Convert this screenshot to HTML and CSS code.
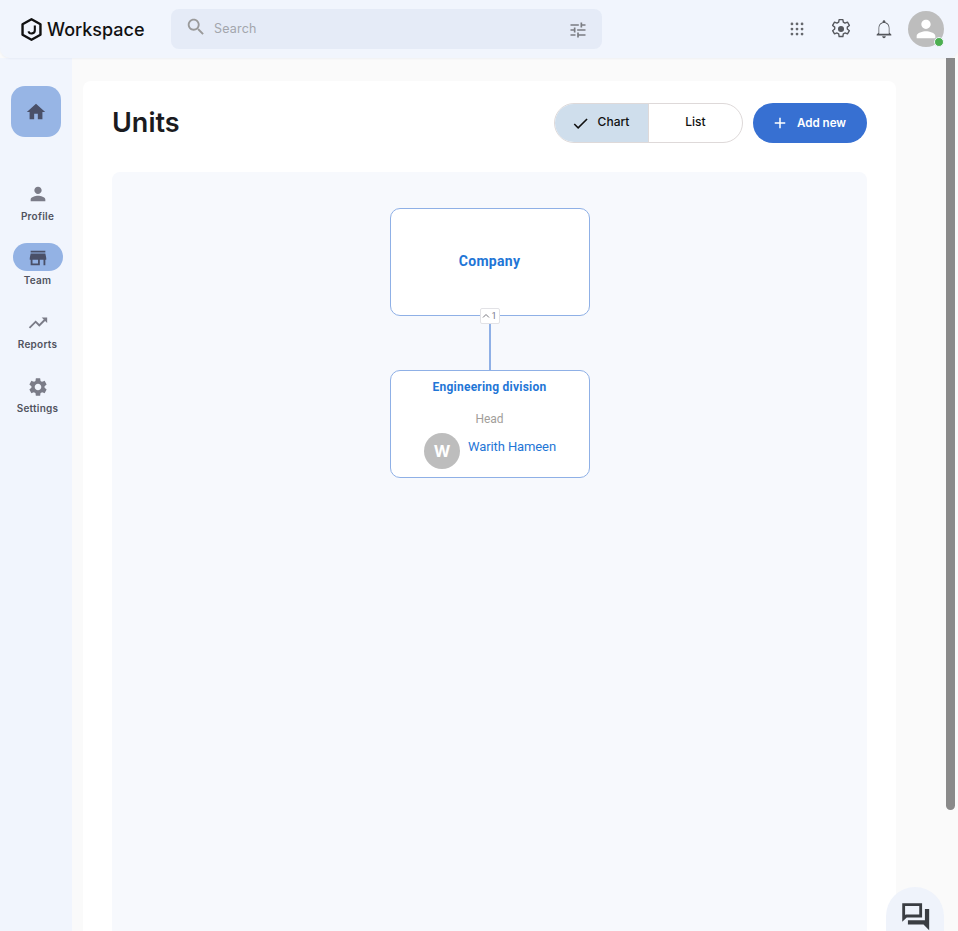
FILE: index.html
```html
<!DOCTYPE html>
<html lang="en">
<head>
<meta charset="utf-8">
<title>Workspace</title>
<link rel="stylesheet" href="styles.css">
</head>
<body>
<header class="topbar">
  <div class="brand">
    <svg class="brand-logo" viewBox="0 0 24 24"><path d="M12 2.2 20.6 7v10L12 21.8 3.4 17V7z" fill="none" stroke="#111" stroke-width="2.3" stroke-linejoin="round"/><path d="M15.2 8.2v4.4a3.2 3.2 0 0 1-6.2 1.1" fill="none" stroke="#111" stroke-width="2"/></svg>
    <span class="brand-name">Workspace</span>
  </div>
  <div class="search">
    <svg class="search-icon" viewBox="0 0 24 24"><path d="M15.5 14h-.79l-.28-.27C15.41 12.59 16 11.11 16 9.5 16 5.91 13.09 3 9.5 3S3 5.91 3 9.5 5.91 16 9.5 16c1.61 0 3.09-.59 4.23-1.57l.27.28v.79l5 4.99L20.49 19l-4.99-5zm-6 0C7.01 14 5 11.99 5 9.5S7.01 5 9.5 5 14 7.01 14 9.5 11.99 14 9.5 14z"/></svg>
    <span class="search-text">Search</span>
    <svg class="tune-icon" viewBox="0 0 24 24"><path d="M3 17v2h6v-2H3zM3 5v2h10V5H3zm10 16v-2h8v-2h-8v-2h-2v6h2zM7 9v2H3v2h4v2h2V9H7zm14 4v-2H11v2h10zm-6-4h2V7h4V5h-4V3h-2v6z"/></svg>
  </div>
  <div class="top-actions">
    <svg class="top-icon" viewBox="0 0 24 24"><g fill="#66686d"><circle cx="6.5" cy="6.5" r="1.5"/><circle cx="12" cy="6.5" r="1.5"/><circle cx="17.5" cy="6.5" r="1.5"/><circle cx="6.5" cy="12" r="1.5"/><circle cx="12" cy="12" r="1.5"/><circle cx="17.5" cy="12" r="1.5"/><circle cx="6.5" cy="17.5" r="1.5"/><circle cx="12" cy="17.5" r="1.5"/><circle cx="17.5" cy="17.5" r="1.5"/></g></svg>
    <svg class="top-icon" viewBox="1.5 1.5 21 21"><circle cx="12" cy="12" r="2.9" fill="#55575c"/><path fill="none" stroke="#55575c" stroke-width="1.3" stroke-linejoin="round" d="M10.2 3h3.6l.4 2.5 1.6.9 2.4-.9 1.8 3.1-2 1.6v1.8l2 1.6-1.8 3.1-2.4-.9-1.6.9-.4 2.5h-3.6l-.4-2.5-1.6-.9-2.4.9-1.8-3.1 2-1.6v-1.8l-2-1.6 1.8-3.1 2.4.9 1.6-.9z"/></svg>
    <svg class="top-icon" viewBox="0 0 24 24"><path fill="#55575c" d="M12 22c1.1 0 2-.9 2-2h-4c0 1.1.9 2 2 2zm6-6v-5c0-3.07-1.63-5.64-4.5-6.32V4c0-.83-.67-1.5-1.5-1.5s-1.5.67-1.5 1.5v.68C7.64 5.36 6 7.92 6 11v5l-2 2v1h16v-1l-2-2zm-.8 1.2H6.8V11c0-2.9 2-5.6 5.2-5.6s5.2 2.7 5.2 5.6v6.2z"/></svg>
    <div class="avatar">
      <svg viewBox="0 0 24 24"><path fill="#fff" d="M12 12c2.21 0 4-1.79 4-4s-1.79-4-4-4-4 1.79-4 4 1.79 4 4 4zm0 2c-2.67 0-8 1.34-8 4v2h16v-2c0-2.66-5.33-4-8-4z"/></svg>
      <span class="status-dot"></span>
    </div>
  </div>
</header>

<div class="shell">
  <nav class="sidebar">
    <div class="home-tile">
      <svg viewBox="0 0 24 24"><path fill="#4a5068" d="M10 20v-6h4v6h5v-8h3L12 3 2 12h3v8z"/></svg>
    </div>
    <ul class="nav-list">
      <li class="nav-item">
        <span class="nav-pill"><svg viewBox="0 0 24 24"><path d="M12 12c2.21 0 4-1.79 4-4s-1.79-4-4-4-4 1.79-4 4 1.79 4 4 4zm0 2c-2.67 0-8 1.34-8 4v2h16v-2c0-2.66-5.33-4-8-4z"/></svg></span>
        <span class="nav-label">Profile</span>
      </li>
      <li class="nav-item nav-item-active">
        <span class="nav-pill"><svg viewBox="0 0 24 24"><path d="M20 4H4v2h16V4zm1 10v-2l-1-5H4l-1 5v2h1v6h10v-6h4v6h2v-6h1zm-9 4H6v-4h6v4z"/></svg></span>
        <span class="nav-label">Team</span>
      </li>
      <li class="nav-item">
        <span class="nav-pill"><svg viewBox="0 0 24 24"><path d="M16 6l2.29 2.29-4.88 4.88-4-4L2 16.59 3.41 18l6-6 4 4 6.3-6.29L22 12V6z"/></svg></span>
        <span class="nav-label">Reports</span>
      </li>
      <li class="nav-item">
        <span class="nav-pill"><svg viewBox="0 0 24 24"><path d="M19.14 12.94c.04-.3.06-.61.06-.94 0-.32-.02-.64-.07-.94l2.03-1.58c.18-.14.23-.41.12-.61l-1.92-3.32c-.12-.22-.37-.29-.59-.22l-2.39.96c-.5-.38-1.03-.7-1.62-.94l-.36-2.54c-.04-.24-.24-.41-.48-.41h-3.84c-.24 0-.43.17-.47.41l-.36 2.54c-.59.24-1.13.57-1.62.94l-2.39-.96c-.22-.08-.47 0-.59.22L2.74 8.87c-.12.21-.08.47.12.61l2.03 1.58c-.05.3-.09.63-.09.94s.02.64.07.94l-2.03 1.58c-.18.14-.23.41-.12.61l1.92 3.32c.12.22.37.29.59.22l2.39-.96c.5.38 1.03.7 1.62.94l.36 2.54c.05.24.24.41.48.41h3.84c.24 0 .44-.17.47-.41l.36-2.54c.59-.24 1.13-.56 1.62-.94l2.39.96c.22.08.47 0 .59-.22l1.92-3.32c.12-.22.07-.47-.12-.61l-2.01-1.58zM12 15.6c-1.98 0-3.6-1.62-3.6-3.6s1.62-3.6 3.6-3.6 3.6 1.62 3.6 3.6-1.62 3.6-3.6 3.6z"/></svg></span>
        <span class="nav-label">Settings</span>
      </li>
    </ul>
  </nav>

  <main class="main">
    <section class="card">
      <div class="card-head">
        <h1 class="title">Units</h1>
        <div class="head-actions">
          <div class="toggle">
            <div class="toggle-opt toggle-on">
              <svg viewBox="0 0 24 24"><path fill="#111" d="M9 16.17L4.83 12l-1.42 1.41L9 19 21 7l-1.41-1.41z"/></svg>
              <span>Chart</span>
            </div>
            <div class="toggle-opt toggle-off"><span>List</span></div>
          </div>
          <button class="add-btn" type="button">
            <svg viewBox="0 0 24 24"><path fill="#fff" d="M19 13h-6v6h-2v-6H5v-2h6V5h2v6h6v2z"/></svg>
            <span>Add new</span>
          </button>
        </div>
      </div>
      <div class="chart">
        <div class="org-node org-root">
          <span class="org-name-lg">Company</span>
          <span class="collapse-badge"><svg class="caret" viewBox="0 0 8 6"><path d="M1 4.5 4 1.5l3 3" fill="none" stroke="#77777f" stroke-width="1"/></svg>1</span>
        </div>
        <div class="connector"></div>
        <div class="org-node org-child">
          <div class="org-name">Engineering division</div>
          <div class="org-role">Head</div>
          <div class="org-person">
            <span class="person-avatar">W</span>
            <span class="person-name">Warith Hameen</span>
          </div>
        </div>
      </div>
    </section>
  </main>
  <div class="gutter"></div>
</div>

<div class="scroll-thumb"></div>
<div class="chat-fab">
  <svg viewBox="0 0 24 24"><path fill="#3a3d42" d="M3 3h14v10H6.2L3 16zm2 2v6.4L5.4 11H15V5zM19 7h3v15l-4-4H7v-3h12z"/></svg>
</div>
</body>
</html>
```
FILE: styles.css
```css
* { box-sizing: border-box; }
html, body { margin: 0; padding: 0; height: 100%; overflow: hidden; }
body { font-family: Inter, "Liberation Sans", sans-serif; background: #fafafa; color: #1b1b1f; }

.topbar {
  height: 58px;
  background: #f1f5fd;
  border-radius: 0 0 10px 10px;
  display: flex;
  align-items: center;
  padding-left: 19px;
  position: relative;
  z-index: 2;
  box-shadow: 0 1px 2px rgba(40, 60, 110, 0.05);
}
.brand { display: flex; align-items: center; width: 152px; }
.brand-logo { width: 25px; height: 25px; margin-right: 3px; flex: none; }
.brand-name { font-size: 18px; font-weight: 500; color: #111; }
.search {
  width: 431px;
  height: 40px;
  background: #e5ebf7;
  border-radius: 8px;
  display: flex;
  align-items: center;
  padding: 0 14px 0 14px;
}
.search-icon { width: 22px; height: 22px; fill: #9a9a9a; margin-top: -4px; }
.search-text { font-size: 12.5px; color: #a3a6ad; margin-left: 7px; flex: 1; margin-top: -2px; letter-spacing: 0.2px; }
.tune-icon { width: 20px; height: 20px; fill: #7a7c82; margin-top: 2px; }
.top-actions { margin-left: auto; display: flex; align-items: center; padding-right: 14px; }
.top-icon { width: 22px; height: 22px; margin-right: 22px; }
.top-actions .top-icon:nth-child(2) { margin-right: 21px; }
.top-actions .top-icon:nth-child(3) { margin-right: 13px; }
.avatar { width: 36px; height: 36px; border-radius: 50%; background: #bdbdbd; position: relative; display: flex; align-items: center; justify-content: center; }
.avatar svg { width: 28px; height: 28px; }
.status-dot { position: absolute; right: 0; bottom: 0; width: 10px; height: 10px; border-radius: 50%; background: #4caf50; border: 1px solid #f1f5fd; }

.shell { display: flex; height: 873px; }
.sidebar { width: 72px; flex: none; background: #f1f5fd; padding-top: 28px; display: flex; flex-direction: column; align-items: center; }
.home-tile { width: 50px; height: 51px; background: #97b5e5; border-radius: 14px; display: flex; align-items: center; justify-content: center; }
.home-tile svg { width: 22px; height: 22px; }
.nav-list { list-style: none; margin: 42px 0 0 2px; padding: 0; display: flex; flex-direction: column; gap: 8px; align-self: flex-start; }
.nav-item { display: flex; flex-direction: column; align-items: center; width: 72px; height: 56px; }
.nav-pill { width: 50px; height: 28px; border-radius: 14px; padding-top: 3px; display: flex; align-items: center; justify-content: center; }
.nav-item:nth-child(-n+2) .nav-pill { padding-top: 1px; }
.nav-pill svg { width: 22px; height: 22px; fill: #7b7c88; }
.nav-item-active .nav-pill { background: #93b2e4; }
.nav-item-active .nav-pill svg { fill: #4a5068; }
.nav-label { font-size: 10px; font-weight: 600; color: #50535e; margin: 3px 1px 0 0; line-height: 12px; letter-spacing: 0.25px; }

.main { width: 824px; flex: none; padding: 23px 0 0 11px; }
.card { width: 813px; height: 850px; background: #fff; border-radius: 8px 8px 0 0; padding: 22px 29px 0; }
.card-head { display: flex; justify-content: space-between; align-items: center; height: 40px; margin-bottom: 29px; }
.title { margin: -2px 0 0; font-size: 27px; font-weight: 600; color: #1b1b1f; }
.head-actions { display: flex; gap: 10px; }
.toggle { display: flex; width: 189px; height: 40px; border: 1px solid #ded9d9; border-radius: 20px; overflow: hidden; }
.toggle-opt { display: flex; align-items: center; justify-content: center; font-size: 12px; font-weight: 500; color: #111; padding-bottom: 3px; }
.toggle-on { width: 94px; background: #cfdeec; border-right: 1px solid #ded9d9; gap: 8px; padding-right: 3px; }
.toggle-on svg { width: 19px; height: 19px; margin-top: 3px; }
.toggle-off { flex: 1; }
.add-btn { width: 114px; height: 40px; border: 0; border-radius: 20px; background: #3770d2; color: #fff; font: 600 11.6px Inter, "Liberation Sans", sans-serif; display: flex; align-items: center; justify-content: center; gap: 8px; padding: 0 3px 0 0; }
.add-btn svg { width: 18px; height: 18px; }

.chart { height: 759px; background: #f7f9fd; border-radius: 8px 8px 0 0; padding-top: 36px; display: flex; flex-direction: column; align-items: center; }
.org-node { width: 200px; height: 108px; background: #fff; border: 1px solid #8fb0e6; border-radius: 10px; position: relative; }
.org-root { display: flex; align-items: center; justify-content: center; padding-bottom: 2px; }
.org-name-lg { font-family: Roboto, "Liberation Sans", sans-serif; font-size: 14px; font-weight: 700; color: #1f76d6; letter-spacing: 0.3px; }
.collapse-badge { position: absolute; left: 89px; bottom: -9px; width: 20px; height: 16px; background: #fff; border: 1px solid #e2e2e6; border-radius: 2px; font: 9px Roboto, sans-serif; color: #76768a; display: flex; align-items: center; justify-content: center; gap: 1px; }
.caret { width: 8px; height: 6px; }
.connector { width: 2px; height: 54px; background: #8fb0e6; }
.org-child { display: flex; flex-direction: column; align-items: center; padding-top: 8px; }
.org-name { font-family: Roboto, "Liberation Sans", sans-serif; font-size: 12px; font-weight: 700; color: #1f76d6; line-height: 16px; letter-spacing: 0.22px; }
.org-role { font-family: Roboto, "Liberation Sans", sans-serif; font-size: 12px; color: #a29e9a; margin-top: 16px; line-height: 16px; }
.org-person { display: flex; align-items: flex-start; margin: 6px 0 0 1px; gap: 8px; }
.person-avatar { width: 36px; height: 36px; border-radius: 50%; background: #bdbdbd; color: #fff; font: 700 16px Inter, "Liberation Sans", sans-serif; display: flex; align-items: center; justify-content: center; }
.person-name { font-family: Roboto, "Liberation Sans", sans-serif; font-size: 13px; color: #1f76d6; line-height: 16px; margin-top: 6px; letter-spacing: -0.1px; }

.gutter { flex: 1; background: #fafafa; }
.scroll-thumb { position: absolute; left: 946px; top: 58px; width: 9px; height: 752px; background: #8a8a8a; border-radius: 0 0 5px 5px; z-index: 1; }
.chat-fab { position: absolute; left: 886px; top: 887px; width: 58px; height: 44px; border-radius: 29px 29px 0 0; background: #eff3fb; display: flex; justify-content: center; padding-top: 12px; z-index: 3; }
.chat-fab svg { width: 34px; height: 34px; flex: none; }
```
